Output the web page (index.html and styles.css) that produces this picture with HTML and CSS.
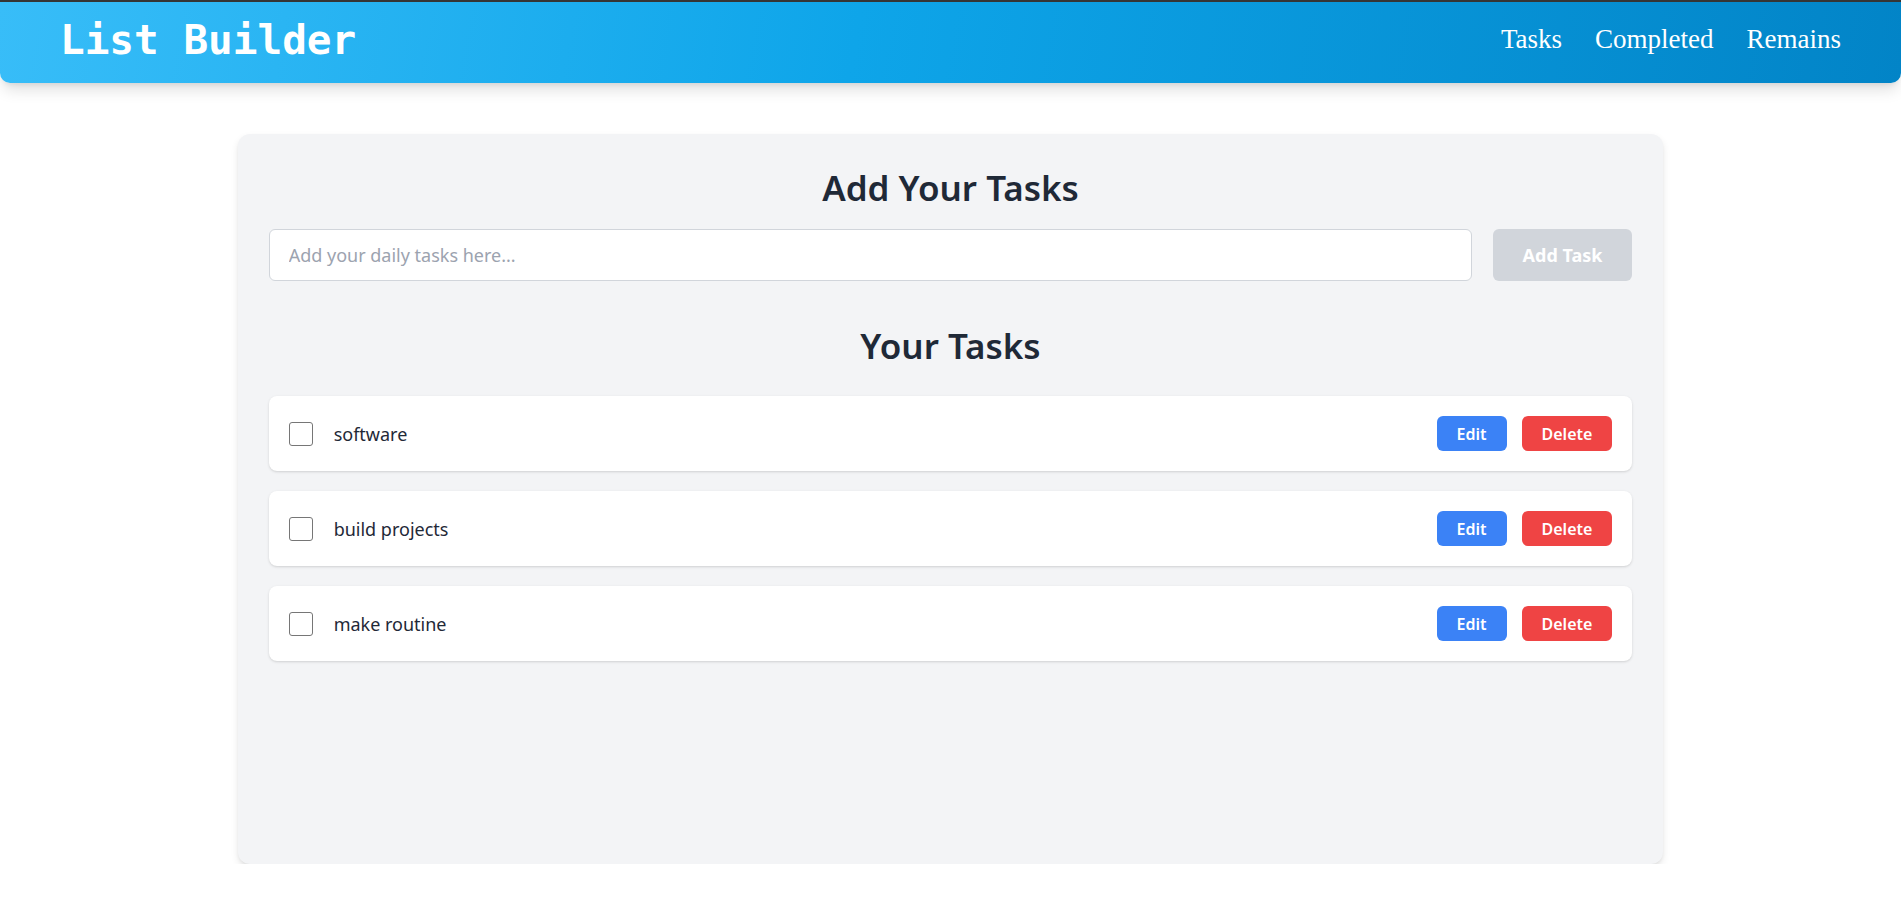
FILE: index.html
```html
<!DOCTYPE html>
<html lang="en">
<head>
<meta charset="utf-8">
<title>List Builder</title>
<link rel="stylesheet" href="styles.css">
</head>
<body>
<div class="topline"></div>
<header class="header">
  <h1 class="brand">List Builder</h1>
  <nav class="nav">
    <a class="nav-link" href="#">Tasks</a>
    <a class="nav-link" href="#">Completed</a>
    <a class="nav-link" href="#">Remains</a>
  </nav>
</header>
<main class="main">
  <section class="card">
    <h2 class="title">Add Your Tasks</h2>
    <div class="add-row">
      <input class="task-input" type="text" placeholder="Add your daily tasks here...">
      <button class="add-btn" type="button">Add Task</button>
    </div>
    <h2 class="title title-list">Your Tasks</h2>
    <ul class="task-list">
      <li class="task">
        <input class="check" type="checkbox">
        <span class="task-text">software</span>
        <div class="actions">
          <button class="btn btn-edit" type="button">Edit</button>
          <button class="btn btn-delete" type="button">Delete</button>
        </div>
      </li>
      <li class="task">
        <input class="check" type="checkbox">
        <span class="task-text">build projects</span>
        <div class="actions">
          <button class="btn btn-edit" type="button">Edit</button>
          <button class="btn btn-delete" type="button">Delete</button>
        </div>
      </li>
      <li class="task">
        <input class="check" type="checkbox">
        <span class="task-text">make routine</span>
        <div class="actions">
          <button class="btn btn-edit" type="button">Edit</button>
          <button class="btn btn-delete" type="button">Delete</button>
        </div>
      </li>
    </ul>
  </section>
</main>
</body>
</html>
```
FILE: styles.css
```css
* { box-sizing: border-box; }
html, body { margin: 0; padding: 0; }
body {
  background: #ffffff;
  font-family: "Noto Sans", "Open Sans", sans-serif;
  color: #1f2937;
}
.topline { height: 2px; background: #353535; }
.header {
  height: 81px;
  display: flex;
  align-items: center;
  justify-content: space-between;
  padding: 0 60px 6px 60px;
  background: linear-gradient(100deg, #38bdf8 0%, #0ea5e9 45%, #0284c7 100%);
  border-radius: 0 0 10px 10px;
  box-shadow: 0 10px 15px -3px rgba(0,0,0,0.12), 0 4px 6px -4px rgba(0,0,0,0.12);
}
.brand {
  margin: 0;
  font-family: "DejaVu Sans Mono", monospace;
  font-weight: 700;
  font-size: 41px;
  color: #ffffff;
}
.nav { display: flex; gap: 33px; }
.nav-link {
  font-family: "Liberation Serif", serif;
  font-size: 27px;
  color: #ffffff;
  text-decoration: none;
}
.main { padding-top: 51px; }
.card {
  width: 75%;
  height: 730px;
  margin: 0 auto;
  padding: 32px 31px;
  background: #f3f4f6;
  border-radius: 12px;
  box-shadow: 0 4px 8px -1px rgba(0,0,0,0.12), 0 2px 4px -2px rgba(0,0,0,0.12);
}
.title {
  margin: 0 0 19px;
  text-align: center;
  font-size: 35px;
  font-weight: 600;
  line-height: 44px;
  color: #1f2937;
}
.title-list { margin: 43px 0 28px; }
.add-row { display: flex; gap: 21px; }
.task-input {
  flex: 1;
  height: 52px;
  padding: 0 19px;
  border: 1px solid #d1d5db;
  border-radius: 6px;
  background: #ffffff;
  font-family: "Noto Sans", sans-serif;
  font-size: 18px;
  color: #1f2937;
  outline: none;
}
.task-input::placeholder { color: #9ca3af; }
.add-btn {
  height: 52px;
  padding: 0 30px;
  border: none;
  border-radius: 6px;
  background: #d1d5db;
  color: #ffffff;
  font-family: "Noto Sans", sans-serif;
  font-size: 18px;
  font-weight: 700;
}
.task-list {
  list-style: none;
  margin: 0;
  padding: 0;
  display: flex;
  flex-direction: column;
  gap: 20px;
}
.task {
  height: 75px;
  display: flex;
  align-items: center;
  padding: 0 20px;
  background: #ffffff;
  border-radius: 8px;
  box-shadow: 0 1px 3px rgba(0,0,0,0.12), 0 1px 2px -1px rgba(0,0,0,0.1);
}
.check {
  appearance: none;
  -webkit-appearance: none;
  width: 24px;
  height: 24px;
  margin: 0;
  border: 1.5px solid #767676;
  border-radius: 3px;
  background: #ffffff;
}
.task-text {
  margin-left: 21px;
  font-size: 18px;
  color: #1f2937;
  flex: 1;
}
.actions { display: flex; gap: 15px; }
.btn {
  height: 35px;
  padding: 0 20px;
  border: none;
  border-radius: 6px;
  color: #ffffff;
  font-family: "Noto Sans", sans-serif;
  font-size: 16px;
  font-weight: 600;
}
.btn-edit { background: #3b82f6; }
.btn-delete { background: #ef4444; }
```
